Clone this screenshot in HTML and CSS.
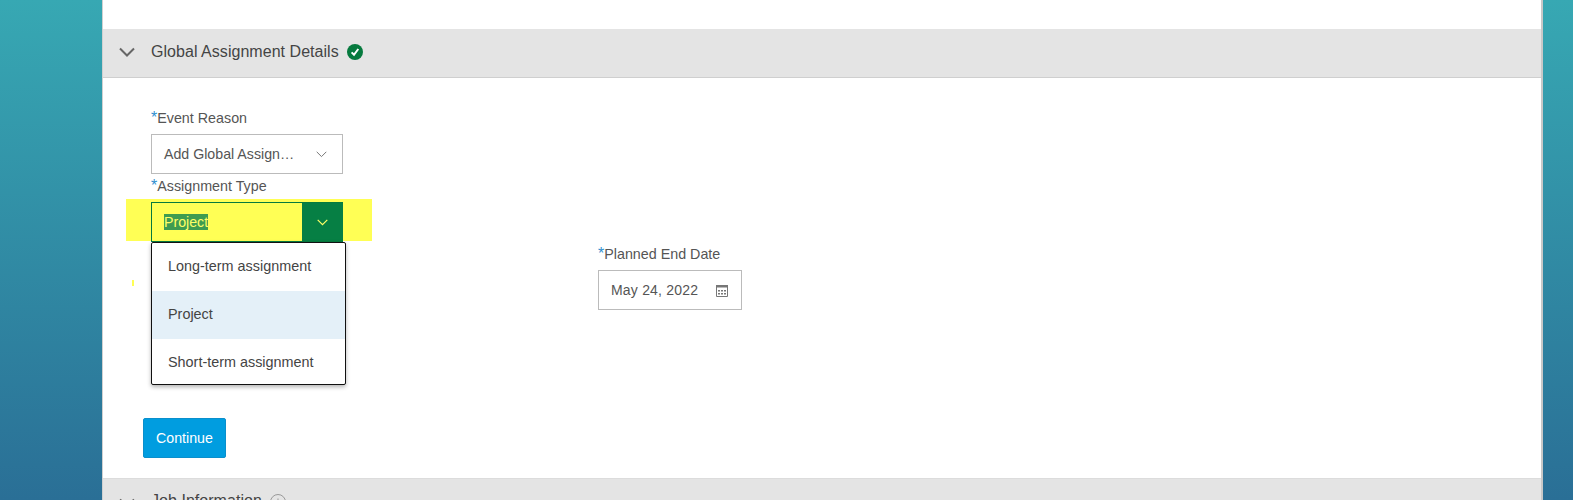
FILE: index.html
```html
<!DOCTYPE html>
<html lang="en">
<head>
<meta charset="utf-8">
<title>Global Assignment Details</title>
<link rel="stylesheet" href="styles.css">
</head>
<body>
<main class="card">
  <header class="section-head">
    <svg class="chev-big" width="16" height="10" viewBox="0 0 16 10"><path d="M1 1.500 8 8.500 15 1.500" fill="none" stroke="#666" stroke-width="2"/></svg>
    <span class="section-title">Global Assignment Details</span>
    <svg class="ok" width="16" height="16" viewBox="0 0 16 16"><circle cx="8" cy="8" r="8" fill="#067a3e"/><path d="M4.600 8.400 7 10.800 11.300 5" fill="none" stroke="#fff" stroke-width="2"/></svg>
  </header>
  <form class="form">
    <div class="field-row first">
      <label class="label"><span class="req">*</span>Event Reason</label>
      <div class="select">
        <span class="value">Add Global Assign…</span>
        <svg class="chev" width="11" height="7" viewBox="0 0 11 7"><path d="M.7.8 5.500 5.600 10.300.8" fill="none" stroke="#777" stroke-width="1"/></svg>
      </div>
    </div>
    <div class="field-row second">
      <label class="label"><span class="req">*</span>Assignment Type</label>
      <div class="highlight">
        <div class="select active">
          <span class="value"><span class="selected-text">Project</span></span>
          <span class="select-btn"><svg width="11" height="7" viewBox="0 0 11 7"><path d="M.7.8 5.500 5.600 10.300.8" fill="none" stroke="#ffff66" stroke-width="1.200"/></svg></span>
        </div>
      </div>
      <ul class="menu">
        <li class="opt">Long-term assignment</li>
        <li class="opt current">Project</li>
        <li class="opt">Short-term assignment</li>
      </ul>
    </div>
    <span class="speck"></span>
    <div class="date-row">
      <label class="label"><span class="req">*</span>Planned End Date</label>
      <div class="select date">
        <span class="value">May 24, 2022</span>
        <svg width="12" height="13" viewBox="0 0 12 13"><path d="M.5 1.500h11v11H.5z" fill="none" stroke="#777"/><path d="M0 1h12v2.500H0z" fill="#777"/><path d="M2 6h2v1.500H2zM5 6h2v1.500H5zM8 6h2v1.500H8zM2 9h2v1.500H2zM5 9h2v1.500H5zM8 9h2v1.500H8z" fill="#777"/></svg>
      </div>
    </div>
    <button class="continue" type="button">Continue</button>
  </form>
  <header class="section-head next">
    <svg class="chev-big" width="16" height="10" viewBox="0 0 16 10"><path d="M1 1.500 8 8.500 15 1.500" fill="none" stroke="#666" stroke-width="2"/></svg>
    <span class="section-title">Job Information</span>
    <svg class="ok" width="16" height="16" viewBox="0 0 16 16"><circle cx="8" cy="8" r="7.500" fill="none" stroke="#999"/><path d="M8 4.500v7M4.500 8h7" stroke="#999"/></svg>
  </header>
</main>
</body>
</html>
```
FILE: styles.css
```css
* { box-sizing: border-box; }
html, body { margin: 0; height: 500px; overflow: hidden; }
body {
  background: linear-gradient(180deg, #37a8b3 0%, #2a6f96 100%);
  font-family: "Liberation Sans", Arial, sans-serif;
  color: #444;
  padding-left: 102px;
}
.card {
  width: 1441px;
  height: 500px;
  overflow: hidden;
  background: #fff;
  border-left: 1px solid #d0d0d0;
  border-right: 2px solid #c8c8c8;
  padding-top: 29px;
}
.section-head {
  height: 49px;
  background: #e4e4e4;
  border-bottom: 1px solid #cfcfcf;
  display: flex;
  align-items: center;
  padding: 0 0 2px 16px;
  font-size: 16px;
}
.section-title { margin-left: 16px; color: #444; letter-spacing: .04px; }
.ok { margin-left: 8px; flex: none; }
.form {
  position: relative;
  height: 400px;
  padding: 31px 0 0 48px;
}
.field-row { width: 192px; position: relative; }
.label { display: block; font-size: 14.3px; line-height: 18px; height: 25px; color: #555; white-space: nowrap; }
.req { color: #2f8fd0; font-size: 16px; line-height: 0; }
.select {
  display: flex;
  align-items: center;
  justify-content: space-between;
  width: 192px;
  height: 40px;
  border: 1px solid #bbb;
  padding: 0 15px 0 12px;
  font-size: 14.2px;
  background: #fff;
  color: #555;
}
.first { margin-bottom: 3px; }
.second .label { height: 26px; }
.highlight {
  background: #ffff55;
  margin: -4px -29px 0 -25px;
  padding: 3px 29px 0 25px;
  height: 42px;
}
.select.active {
  background: #ffff55;
  border: 1px solid #067a3e;
  border-right: 0;
  padding: 0 0 0 12px;
}
.selected-text { background: #3f9c50; color: #ffff66; }
.select-btn {
  width: 41px;
  align-self: stretch;
  background: #067f44;
  display: flex;
  align-items: center;
  justify-content: center;
}
.menu {
  position: absolute;
  left: 0;
  top: 65px;
  width: 195px;
  margin: 0;
  padding: 0;
  list-style: none;
  background: #fff;
  border: 1px solid #111;
  border-radius: 2px;
  box-shadow: 0 2px 4px rgba(0, 0, 0, .3);
  z-index: 2;
  font-size: 14.4px;
}
.opt { height: 48px; line-height: 46px; padding-left: 16px; color: #444; }
.opt:last-child { height: 45px; line-height: 46px; }
.current { background: #e4f0f8; }
.speck {
  position: absolute;
  left: 29px;
  top: 202px;
  width: 2px;
  height: 6px;
  background: #ffff55;
}
.date-row { margin: 4px 0 0 447px; width: 144px; }
.select.date { width: 144px; padding-right: 13px; letter-spacing: .2px; font-size: 14px; }
.continue {
  display: block;
  margin: 108px 0 0 -8px;
  width: 83px;
  height: 40px;
  background: #009de0;
  border: 1px solid #0a8fcc;
  border-radius: 2px;
  color: #fff;
  font: 14.2px "Liberation Sans", Arial, sans-serif;
}
.next { height: 60px; align-items: flex-start; padding-top: 13px; border-top: 1px solid #dcdcdc; border-bottom: 0; }
.next .chev-big { margin-top: 6px; }
.next .ok { margin-top: 2px; }
```
